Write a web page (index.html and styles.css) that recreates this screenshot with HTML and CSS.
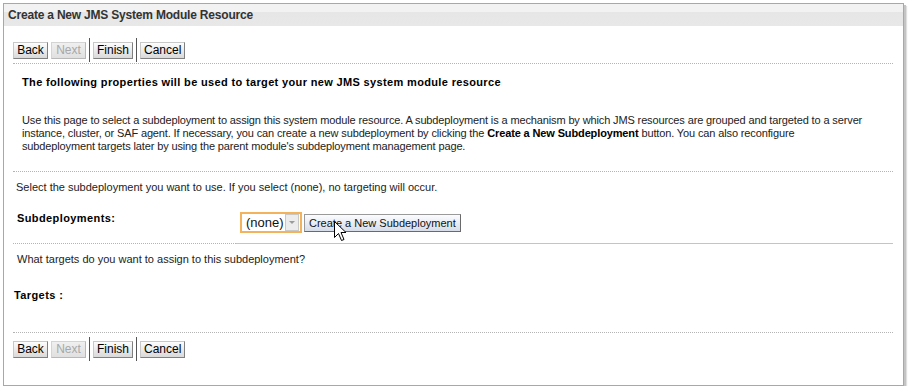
FILE: index.html
```html
<!DOCTYPE html>
<html lang="en">
<head>
  <meta charset="UTF-8" />
  <title>Create a New JMS System Module Resource</title>
  <link rel="stylesheet" href="styles.css">
</head>
<body>
  <div class="panel">
    <div class="panel-title">Create a New JMS System Module Resource</div>

    <div class="button-bar">
      <button class="btn">Back</button>
      <button class="btn" disabled>Next</button>
      <span class="sep"></span>
      <button class="btn">Finish</button>
      <span class="sep"></span>
      <button class="btn">Cancel</button>
    </div>
    <div class="dotted"></div>

    <div class="intro">
      <h2 class="intro-title">The following properties will be used to target your new JMS system module resource</h2>
      <p class="intro-text">Use this page to select a subdeployment to assign this system module resource. A subdeployment is a mechanism by which JMS resources are grouped and targeted to a server instance, cluster, or SAF agent. If necessary, you can create a new subdeployment by clicking the <b>Create a New Subdeployment</b> button. You can also reconfigure subdeployment targets later by using the parent module's subdeployment management page.</p>
    </div>
    <div class="dotted dotted-mid"></div>

    <p class="hint">Select the subdeployment you want to use. If you select (none), no targeting will occur.</p>

    <div class="field-row">
      <label class="field-label">Subdeployments:</label>
      <div class="select">
        <span class="select-value">(none)</span>
        <span class="select-arrow"></span>
      </div>
      <button class="btn-create">Create a New Subdeployment</button>
      <svg class="cursor" width="13" height="20" viewBox="0 0 13 20">
        <path d="M0.5 0.5 L0.5 16.5 L4.5 12.5 L7.5 19.5 L10 18.5 L7 11.5 L12 11.5 Z" fill="#fff" stroke="#000" stroke-width="1"/>
      </svg>
    </div>
    <div class="split-line">
      <span class="split-dotted"></span>
      <span class="split-solid"></span>
    </div>

    <p class="hint hint-targets">What targets do you want to assign to this subdeployment?</p>
    <div class="targets-label">Targets :</div>

    <div class="dotted dotted-bottom"></div>
    <div class="button-bar button-bar-bottom">
      <button class="btn">Back</button>
      <button class="btn" disabled>Next</button>
      <span class="sep"></span>
      <button class="btn">Finish</button>
      <span class="sep"></span>
      <button class="btn">Cancel</button>
    </div>
  </div>
</body>
</html>
```

FILE: styles.css
```css
body {
  margin: 0;
  background: #fff;
  font-family: 'Liberation Sans', Arial, sans-serif;
  font-size: 11px;
  color: #222;
}
.panel {
  margin: 3px 0 0 3px;
  width: 899px;
  height: 381px;
  border: 1px solid #a8a8a8;
  box-shadow: 2px 2px 0 #c4c4c4, 3px 3px 1px #e0e0e0;
  background: white;
}
.panel-title {
  height: 22px;
  line-height: 22px;
  padding-left: 4px;
  font-weight: bold;
  font-size: 12px;
  letter-spacing: -0.2px;
  color: #333;
  background: linear-gradient(#f2f2f2 0, #f2f2f2 35%, #e6e6e6 36%, #e8e8e8 100%);
}
.button-bar {
  display: flex;
  align-items: center;
  gap: 3px;
  height: 24px;
  margin: 12px 0 0 9px;
}
.btn {
  min-width: 35px;
  height: 17px;
  padding: 0 3px;
  font-family: 'Liberation Sans', Arial, sans-serif;
  font-size: 12px;
  color: #000;
  background: linear-gradient(#fdfdfd, #d9d9d9);
  border: 1px solid;
  border-color: #c8c8c8 #808080 #808080 #c8c8c8;
  border-radius: 0;
}
.btn:disabled {
  color: #a8a8a8;
  background: linear-gradient(#f0f0f0, #e0e0e0);
  border-color: #d4d4d4 #b8b8b8 #b8b8b8 #d4d4d4;
}
.sep {
  width: 1px;
  height: 24px;
  background: #555;
}
.dotted {
  margin: 1px 10px 0 9px;
  border-top: 1px dotted #b4b4b4;
}
.intro {
  padding-left: 18px;
  padding-right: 36px;
}
.intro-title {
  margin: 12px 0 0;
  font-size: 11px;
  line-height: 13px;
  font-weight: bold;
  letter-spacing: 0.35px;
  color: #000;
  white-space: nowrap;
}
.intro-text {
  margin: 25px 0 0;
  line-height: 13px;
  letter-spacing: -0.13px;
}
.intro-text b {
  color: #000;
}
.dotted-mid {
  margin-top: 18px;
}
.hint {
  margin: 9px 0 0 12px;
  line-height: 13px;
}
.field-row {
  position: relative;
  display: flex;
  align-items: flex-start;
  margin: 17px 0 0 13px;
}
.field-label {
  width: 223px;
  margin-top: 1px;
  font-weight: bold;
  letter-spacing: 0.4px;
  color: #000;
  line-height: 13px;
}
.select {
  display: flex;
  align-items: center;
  justify-content: space-between;
  width: 53px;
  height: 17px;
  padding: 0 1px 0 4px;
  border: 2px solid #f2b35c;
  margin-top: 1px;
}
.select-value {
  font-size: 13px;
  color: #111;
}
.select-arrow {
  position: relative;
  width: 12px;
  height: 15px;
  background: #ececec;
  border: 1px solid #c8c8c8;
}
.select-arrow::after {
  content: "";
  position: absolute;
  left: 3px;
  top: 6px;
  border-left: 3px solid transparent;
  border-right: 3px solid transparent;
  border-top: 3px solid #9a9a9a;
}
.btn-create {
  height: 18px;
  margin: 3px 0 0 2px;
  padding: 0 4px;
  font-family: 'Liberation Sans', Arial, sans-serif;
  font-size: 11px;
  color: #111;
  background: linear-gradient(#fbfcfe, #d6dde9);
  border: 1px solid;
  border-color: #9a9a9a #6a6a6a #6a6a6a #9a9a9a;
  border-radius: 0;
}
.cursor {
  position: absolute;
  left: 317px;
  top: 10px;
}
.split-line {
  display: flex;
  margin: 10px 10px 0 9px;
}
.split-dotted {
  width: 223px;
  border-top: 1px dotted #b4b4b4;
}
.split-solid {
  flex: 1;
  border-top: 1px solid #c4c4c4;
}
.hint-targets {
  margin: 9px 0 0 13px;
}
.targets-label {
  margin: 23px 0 0 10px;
  font-weight: bold;
  letter-spacing: 0.4px;
  color: #000;
  line-height: 13px;
}
.dotted-bottom {
  margin-top: 30px;
}
.button-bar-bottom {
  margin-top: 4px;
}
```
